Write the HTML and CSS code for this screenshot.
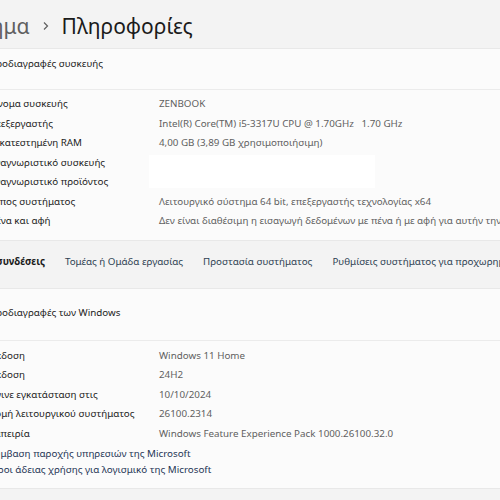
FILE: index.html
```html
<!DOCTYPE html>
<html lang="el">
<head>
    <meta charset="UTF-8">
    <meta name="viewport" content="width=device-width, initial-scale=1.0">
    <title>Πληροφορίες</title>
    <link rel="stylesheet" href="styles.css">
</head>
<body>
    <div class="page">
        <h1 class="crumb">
            <span class="crumb-parent">Σύστημα</span>
            <svg class="crumb-sep" width="8" height="10" viewBox="0 0 8 10"><path d="M2 1.5 L5.5 5 L2 8.5" fill="none" stroke="#5f5f5f" stroke-width="1.2"/></svg>
            <span class="crumb-current">Πληροφορίες</span>
        </h1>

        <section class="card">
            <div class="card-head">Προδιαγραφές συσκευής</div>
            <dl class="specs">
                <div class="spec"><dt>Όνομα συσκευής</dt><dd>ZENBOOK</dd></div>
                <div class="spec"><dt>Επεξεργαστής</dt><dd>Intel(R) Core(TM) i5-3317U CPU @ 1.70GHz&nbsp;&nbsp;&nbsp;1.70 GHz</dd></div>
                <div class="spec"><dt>Εγκατεστημένη RAM</dt><dd>4,00 GB (3,89 GB χρησιμοποιήσιμη)</dd></div>
                <div class="spec"><dt>Αναγνωριστικό συσκευής</dt><dd></dd></div>
                <div class="spec"><dt>Αναγνωριστικό προϊόντος</dt><dd></dd></div>
                <div class="spec"><dt>Τύπος συστήματος</dt><dd>Λειτουργικό σύστημα 64 bit, επεξεργαστής τεχνολογίας x64</dd></div>
                <div class="spec"><dt>Πένα και αφή</dt><dd>Δεν είναι διαθέσιμη η εισαγωγή δεδομένων με πένα ή με αφή για αυτήν την οθόνη</dd></div>
                <div class="redact"></div>
            </dl>
        </section>

        <nav class="related">
            <span class="related-title">Σχετικές συνδέσεις</span>
            <a href="#">Τομέας ή Ομάδα εργασίας</a>
            <a href="#">Προστασία συστήματος</a>
            <a href="#">Ρυθμίσεις συστήματος για προχωρημένους</a>
        </nav>

        <section class="card card-windows">
            <div class="card-head">Προδιαγραφές των Windows</div>
            <dl class="specs">
                <div class="spec"><dt>Έκδοση</dt><dd>Windows 11 Home</dd></div>
                <div class="spec"><dt>Έκδοση</dt><dd>24H2</dd></div>
                <div class="spec"><dt>Έγινε εγκατάσταση στις</dt><dd>10/10/2024</dd></div>
                <div class="spec"><dt>Δομή λειτουργικού συστήματος</dt><dd>26100.2314</dd></div>
                <div class="spec"><dt>Εμπειρία</dt><dd>Windows Feature Experience Pack 1000.26100.32.0</dd></div>
            </dl>
            <div class="legal">
                <a href="#">Σύμβαση παροχής υπηρεσιών της Microsoft</a>
                <a href="#">Όροι άδειας χρήσης για λογισμικό της Microsoft</a>
            </div>
        </section>
    </div>
</body>
</html>
```

FILE: styles.css
```css
body {
    margin: 0;
    background-color: #f3f3f3;
    color: #1b1b1b;
    font-family: 'Noto Sans', sans-serif;
    font-size: 9.8px;
    overflow: hidden;
}

.page {
    width: 640px;
    margin-left: -40px;
}

/* breadcrumb title */
.crumb {
    display: flex;
    align-items: center;
    gap: 12px;
    height: 48px;
    margin: 0 0 0 -17px;
    padding-top: 4px;
    font-size: 21px;
    font-weight: 400;
    box-sizing: border-box;
}

.crumb-parent {
    color: #5f5f5f;
}

.crumb-current {
    color: #1b1b1b;
}

/* cards */
.card {
    background-color: #fbfbfb;
    border: 1px solid #e8e8e8;
    border-radius: 4px;
}

.card-head {
    height: 41px;
    padding: 5px 0 0 28px;
    box-sizing: border-box;
    line-height: 20px;
    border-bottom: 1px solid #ebebeb;
}

.card-windows .card-head {
    height: 52px;
    padding-top: 14px;
}

.specs {
    position: relative;
    margin: 0;
    padding: 4px 0 9px 28px;
}

.card-windows .specs {
    padding-bottom: 0;
    padding-top: 5px;
}

.spec {
    display: grid;
    grid-template-columns: 170px 1fr;
    height: 19.5px;
    align-items: center;
}

.spec dt {
    white-space: nowrap;
}

.spec dd {
    margin: 0;
    color: #5f5f5f;
    white-space: nowrap;
}

/* covered id fields */
.redact {
    position: absolute;
    left: 188px;
    top: 65px;
    width: 226px;
    height: 33px;
    background-color: #ffffff;
}

/* related links band */
.related {
    display: flex;
    align-items: center;
    gap: 20px;
    height: 47px;
    margin-left: -8px;
    padding-bottom: 6px;
    box-sizing: border-box;
    white-space: nowrap;
}

.related-title {
    font-weight: 700;
    color: #1b1b1b;
}

.related a {
    color: #2e3f52;
    text-decoration: none;
}

.legal {
    display: flex;
    flex-direction: column;
    padding: 3px 0 10px 28px;
}

.legal a {
    color: #1f3656;
    text-decoration: none;
    line-height: 16px;
}
```
